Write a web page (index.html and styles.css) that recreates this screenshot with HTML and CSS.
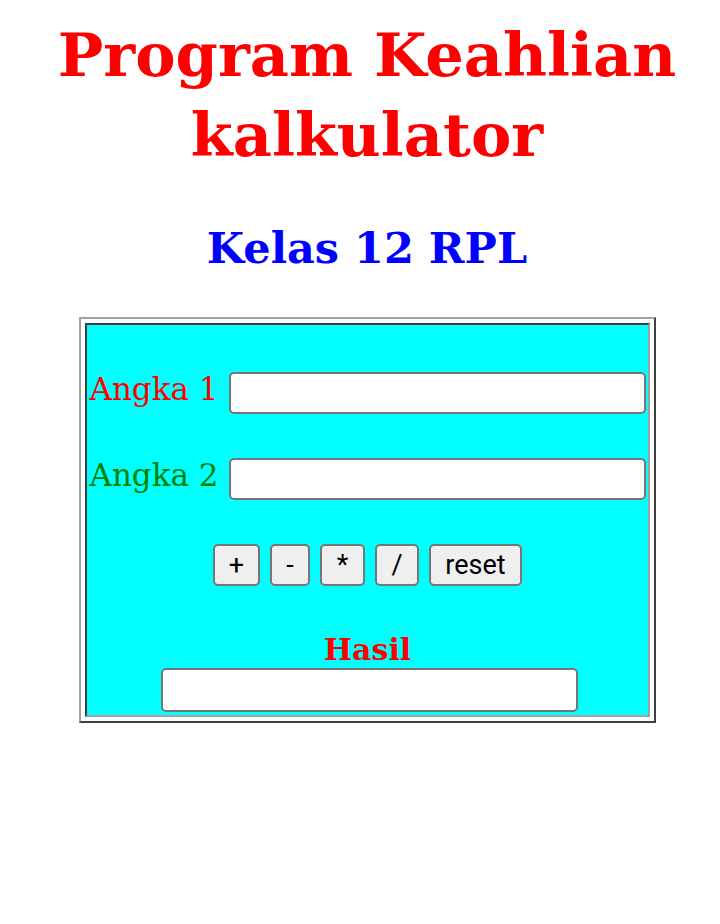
FILE: index.html
```html
<!DOCTYPE html>
<html>
<head>
<meta charset="utf-8">
<link rel="stylesheet" href="styles.css">
</head>
<body>
<h1 class="title">Program Keahlian<br>kalkulator</h1>
<h2 class="subtitle">Kelas 12 RPL</h2>
<div class="frame">
  <div class="cell">
    <div class="row">
      <span class="label red">Angka 1</span>
      <input class="field" type="text">
    </div>
    <div class="row">
      <span class="label green">Angka 2</span>
      <input class="field" type="text">
    </div>
    <div class="buttons">
      <button class="btn b-plus">+</button>
      <button class="btn b-minus">-</button>
      <button class="btn b-mul">*</button>
      <button class="btn b-div">/</button>
      <button class="btn b-reset">reset</button>
    </div>
    <div class="hasil">Hasil</div>
    <input class="field result" type="text">
  </div>
</div>
</body>
</html>
```
FILE: styles.css
```css
html, body { margin: 0; padding: 0; background: #fff; }
body { padding: 8px 8px 8px 22px; font-family: "DejaVu Serif", serif; }
.title {
  margin: 7px 0 0;
  text-align: center;
  color: #ff0000;
  font-size: 60.5px;
  line-height: 80px;
  font-weight: bold;
}
.subtitle {
  margin: 43px 0 0;
  text-align: center;
  color: #0000ff;
  font-size: 43px;
  line-height: 60px;
  font-weight: bold;
}
.frame {
  margin: 39px auto 0;
  width: 565px;
  border: 2px solid;
  border-color: #a0a0a0 #404040 #404040 #a0a0a0;
  padding: 4px;
}
.cell {
  background: #00ffff;
  border: 2px solid;
  border-color: #404040 #a0a0a0 #a0a0a0 #404040;
  padding: 47px 2px 3px 3px;
  display: flex;
  flex-direction: column;
  align-items: stretch;
}
.row {
  display: flex;
  align-items: center;
  gap: 10px;
  height: 42px;
  margin-bottom: 44px;
}
.label {
  font-family: "DejaVu Serif", serif;
  font-size: 31px;
  white-space: nowrap;
  margin-bottom: 9px;
}
.red { color: #ff0000; }
.green { color: #008000; }
.field {
  flex: 1;
  height: 42px;
  box-sizing: border-box;
  border: 2px solid #767676;
  border-radius: 5px;
  background: #fff;
  margin: 0;
}
.buttons {
  display: flex;
  justify-content: center;
  gap: 10px;
}
.btn {
  height: 42px;
  box-sizing: border-box;
  border: 2px solid #767676;
  border-radius: 5px;
  background: #efefef;
  font-family: Roboto, sans-serif;
  font-size: 27px;
  color: #000;
  padding: 0;
  margin: 0;
}
.b-plus { width: 47px; }
.b-minus { width: 40px; }
.b-mul { width: 45px; }
.b-div { width: 44px; }
.b-reset { width: 93px; }
.hasil {
  margin-top: 48px;
  text-align: center;
  color: #ff0000;
  font-weight: bold;
  font-size: 30px;
  line-height: 32px;
}
.result {
  flex: none;
  width: 417px;
  height: 44px;
  align-self: center;
  margin: 2px 0 0 4px;
}
```
